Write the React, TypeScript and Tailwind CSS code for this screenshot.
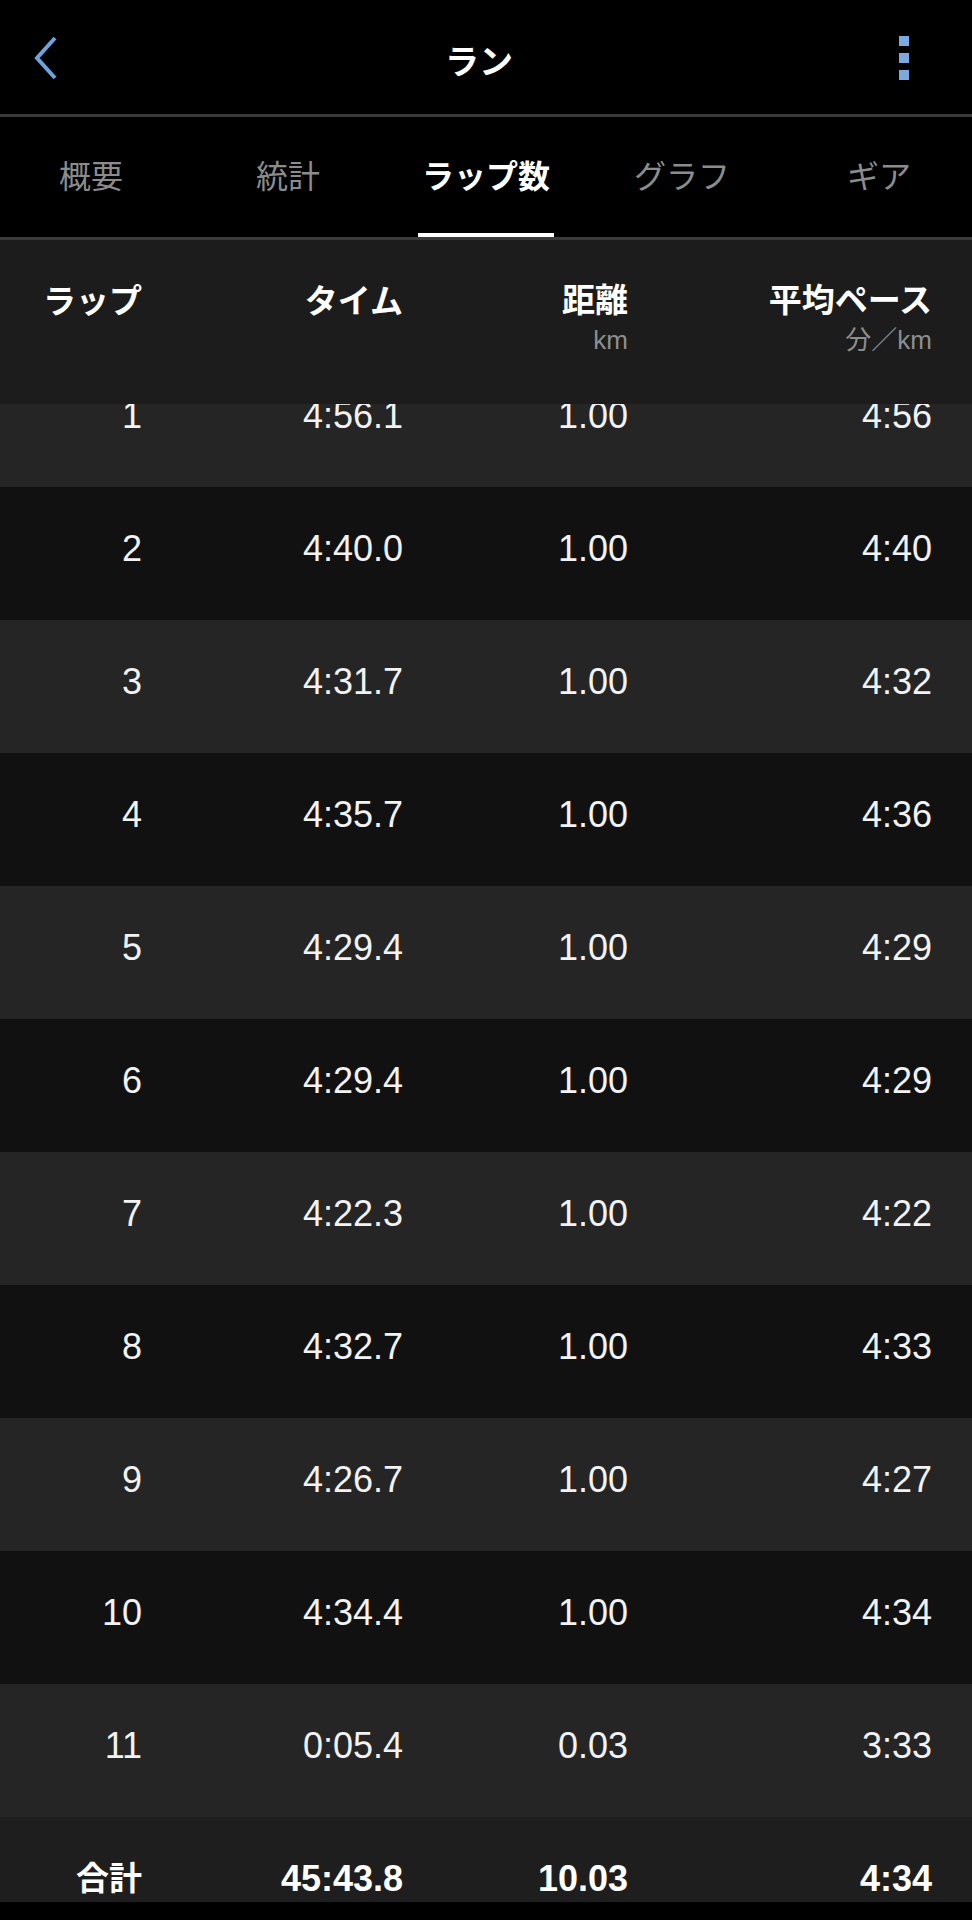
const TABS = ['概要', '統計', 'ラップ数', 'グラフ', 'ギア'];

const LAPS = [
  { lap: '1', time: '4:56.1', dist: '1.00', pace: '4:56' },
  { lap: '2', time: '4:40.0', dist: '1.00', pace: '4:40' },
  { lap: '3', time: '4:31.7', dist: '1.00', pace: '4:32' },
  { lap: '4', time: '4:35.7', dist: '1.00', pace: '4:36' },
  { lap: '5', time: '4:29.4', dist: '1.00', pace: '4:29' },
  { lap: '6', time: '4:29.4', dist: '1.00', pace: '4:29' },
  { lap: '7', time: '4:22.3', dist: '1.00', pace: '4:22' },
  { lap: '8', time: '4:32.7', dist: '1.00', pace: '4:33' },
  { lap: '9', time: '4:26.7', dist: '1.00', pace: '4:27' },
  { lap: '10', time: '4:34.4', dist: '1.00', pace: '4:34' },
  { lap: '11', time: '0:05.4', dist: '0.03', pace: '3:33' },
];

const COLS = 'grid grid-cols-[142px_261px_225px_304px] text-right';

function Row({ lap, time, dist, pace, dark }: { lap: string; time: string; dist: string; pace: string; dark: boolean }) {
  return (
    <div className={`${COLS} h-[133px] shrink-0 items-center pb-[10px] text-[36px] text-[#f2f2f2] ${dark ? 'bg-[#111111]' : 'bg-[#252525]'}`}>
      <span>{lap}</span>
      <span>{time}</span>
      <span>{dist}</span>
      <span>{pace}</span>
    </div>
  );
}

export default function App() {
  return (
    <div
      className="w-[972px] h-[1920px] bg-black flex flex-col overflow-hidden"
      style={{ fontFamily: '"Liberation Sans", "Noto Sans CJK JP", sans-serif' }}
    >
      {/* Top bar */}
      <div className="h-[114px] shrink-0 flex items-center justify-between px-[32px] pt-[2px]">
        <svg width="26" height="44" viewBox="0 0 26 44" className="ml-[1px]">
          <path d="M22 2 L4 22 L22 42" fill="none" stroke="#6fa3dc" strokeWidth="4" />
        </svg>
        <span className="mt-[8px] text-[34px] font-bold text-white">ラン</span>
        <div className="flex flex-col gap-[7px] mr-[31px]">
          <span className="w-[10px] h-[10px] bg-[#7aaae0]" />
          <span className="w-[10px] h-[10px] bg-[#7aaae0]" />
          <span className="w-[10px] h-[10px] bg-[#7aaae0]" />
        </div>
      </div>
      <div className="h-[3px] shrink-0 bg-[#3a3a3a]" />

      {/* Tabs */}
      <div className="h-[120px] shrink-0 grid grid-cols-[182px_212px_184px_208px_186px]">
        {TABS.map((t, i) => (
          <div key={t} className="relative flex items-center justify-center">
            <span className={`text-[32px] ${i === 2 ? 'font-bold text-white' : 'text-[#8c8c8c]'}`}>{t}</span>
            {i === 2 && <span className="absolute bottom-0 left-1/2 -translate-x-1/2 w-[136px] h-[4px] bg-white" />}
          </div>
        ))}
      </div>
      <div className="h-[3px] shrink-0 bg-[#3a3a3a]" />

      {/* Table header */}
      <div className={`${COLS} h-[164px] shrink-0 bg-[#1c1c1c] items-start pt-[37px] text-white`}>
        <span className="text-[33px] font-bold">ラップ</span>
        <span className="text-[33px] font-bold">タイム</span>
        <div className="flex flex-col items-end">
          <span className="text-[33px] font-bold leading-[48px]">距離</span>
          <span className="text-[26px] text-[#8e8e8e] leading-[30px]">km</span>
        </div>
        <div className="flex flex-col items-end">
          <span className="text-[33px] font-bold leading-[48px]">平均ペース</span>
          <span className="text-[26px] text-[#8e8e8e] leading-[30px]">分／km</span>
        </div>
      </div>

      {/* Laps list (scrolled) */}
      <div className="h-[1498px] shrink-0 overflow-hidden">
        <div className="-mt-[50px] flex flex-col">
          {LAPS.map((l, i) => (
            <Row key={l.lap} {...l} dark={i % 2 === 1} />
          ))}
          <div className={`${COLS} h-[133px] shrink-0 items-center pb-[10px] text-[36px] font-bold text-white bg-[#1e1e1e]`}>
            <span className="text-[33px]">合計</span>
            <span>45:43.8</span>
            <span>10.03</span>
            <span>4:34</span>
          </div>
        </div>
      </div>
    </div>
  );
}
